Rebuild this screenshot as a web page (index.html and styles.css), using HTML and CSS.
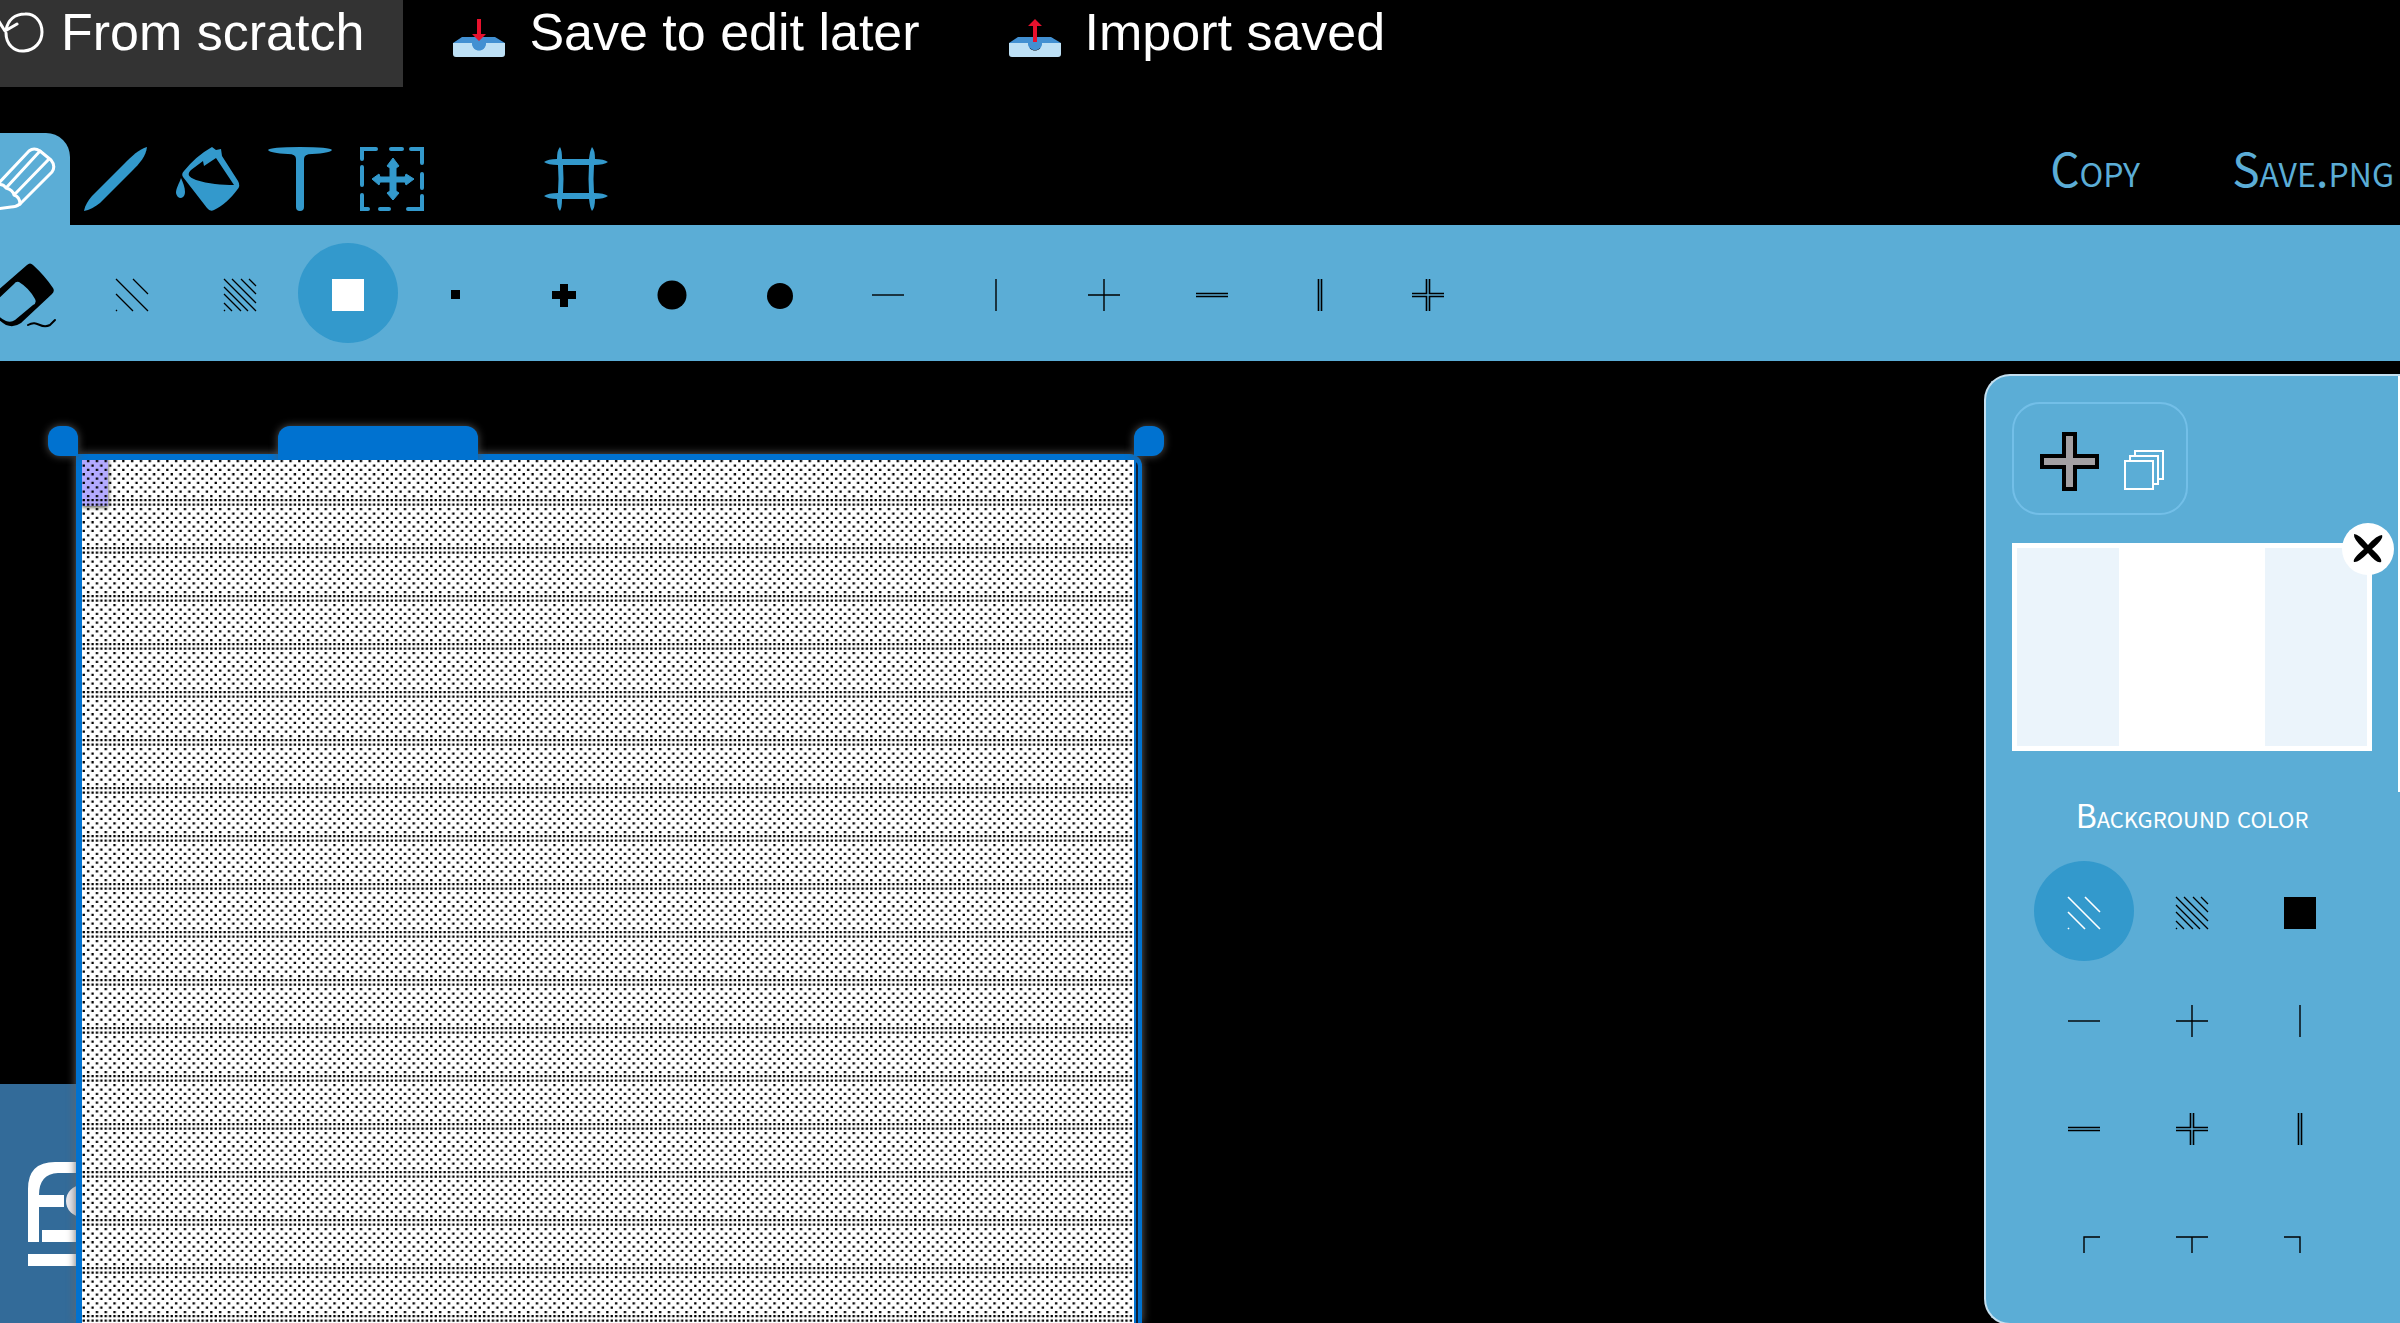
FILE: index.html
```html
<!DOCTYPE html>
<html lang="en">
<head>
<meta charset="utf-8">
<meta name="viewport" content="width=device-width, initial-scale=1">
<title>Text drawing editor</title>
<link rel="stylesheet" href="styles.css">
</head>
<body>
<header class="file-bar">
  <button class="file-btn is-active" type="button">
    <svg class="reset-icon" viewBox="0 0 44 60" aria-hidden="true"><path d="M6 33C6 44 14 52 24 51C35 50 42 42 42 32C42 21 34 13 25 14C15 14 8 20 6 30M-2 20L5 31L17 24" fill="none" stroke="#fff" stroke-width="3" stroke-linecap="round" stroke-linejoin="round"/></svg>
    <span>From scratch</span>
  </button>
  <button class="file-btn" type="button">
    <svg class="tray-icon" viewBox="0 0 52 60" aria-hidden="true"><path d="M9 37H42L52 43V48H33C32 52 20 52 19 48H0V43Z" fill="#4290d2"/><path d="M0 43H19C19 53 33 53 33 43H52V54Q52 57 49 57H3Q0 57 0 54Z" fill="#bde0f5"/><path d="M19 42H33C33 53 19 53 19 42Z" fill="#4290d2"/><path d="M24 19H28V34H33L26 41L19 34H24Z" fill="#e8112d"/></svg>
    <span>Save to edit later</span>
  </button>
  <button class="file-btn" type="button">
    <svg class="tray-icon" viewBox="0 0 52 60" aria-hidden="true"><path d="M9 37H42L52 43V48H0V43Z" fill="#4290d2"/><path d="M0 43H19C19 53 33 53 33 43H52V54Q52 57 49 57H3Q0 57 0 54Z" fill="#bde0f5"/><path d="M19 42H33C33 53 19 53 19 42Z" fill="#4290d2"/><path d="M24 42V26H19L26 19L33 26H28V42Z" fill="#e8112d"/></svg>
    <span>Import saved</span>
  </button>
</header>

<nav class="tool-bar" aria-label="Tools">
  <div class="tools">
    <button class="tool is-active" type="button" aria-label="Pencil">
      <svg viewBox="0 0 64 64" aria-hidden="true"><g fill="none" stroke="#fff" stroke-width="3" stroke-linejoin="round" stroke-linecap="round"><path d="M5 38L37 4Q42 0 48 4L59 13Q64 19 60 25L28 57Q24 60 19 60L-3 63L2 44Z"/><path d="M5 38Q11 36 14 41Q21 43 22 48Q28 50 28 57M14 41L48 4M22 48L57 12"/></g></svg>
    </button>
    <button class="tool" type="button" aria-label="Line">
      <svg viewBox="0 0 64 64" aria-hidden="true"><path d="M63 0C62 9 56 16 48 24L16 56C11 60 5 63 0 64C1 58 4 54 8 49L40 17C48 9 55 2 63 0Z"/></svg>
    </button>
    <button class="tool" type="button" aria-label="Fill">
      <svg viewBox="0 0 64 64" aria-hidden="true"><path fill-rule="evenodd" d="M36 0L40 3L45 2L46 9L62 34Q65 39 61 43C55 51 47 59 38 63Q34 65 31 61L7 30Q5 27 8 24Q20 9 36 0ZM15 23C11 27 12 30 20 33C32 37 46 38 58 38L40 11L28 19L27 14Z"/><path d="M5 31C3 37 0 41 0 46Q1 51 5 51Q9 50 9 45C9 40 7 36 5 31Z"/></svg>
    </button>
    <button class="tool" type="button" aria-label="Text">
      <svg viewBox="0 0 64 64" aria-hidden="true"><path d="M0 3Q2 0 32 0Q62 0 64 3Q62 6 44 7Q36 7 36 12V60Q36 64 32 64Q28 64 28 60V12Q28 7 20 7Q2 6 0 3Z"/></svg>
    </button>
    <button class="tool" type="button" aria-label="Select and move">
      <svg viewBox="0 0 64 64" aria-hidden="true"><path d="M2 12V2H16M31 2H42M51 2H62V16M62 27V41M62 49V62H48M29 62H20M8 62H2V48M2 38V20" fill="none" stroke="#3399cc" stroke-width="4" stroke-linecap="round"/><path d="M33 11L39 19L36 21V30H45L46 27L54 32L46 38L45 35H36V44L39 46L33 53L27 46L30 44V35H20L19 38L12 32L19 27L20 30H30V21L27 19Z" stroke="#3399cc" stroke-linejoin="round"/></svg>
    </button>
    <button class="tool" type="button" aria-label="Blank tool"></button>
    <button class="tool" type="button" aria-label="Resize canvas">
      <svg viewBox="0 0 64 64" aria-hidden="true"><path d="M16 0Q18 3 18 12H45Q46 3 48 0Q51 3 51 12Q60 12 64 15Q60 18 50 18Q49 31 50 46Q60 46 64 49Q60 52 51 52Q51 61 48 64Q46 61 45 52H18Q18 61 16 64Q13 61 13 52Q4 52 0 49Q4 46 14 46Q15 31 14 18Q4 18 0 15Q4 12 13 12Q13 3 16 0ZM19 18Q20 32 19 46H45Q44 32 45 18Z" fill-rule="evenodd"/></svg>
    </button>
  </div>
  <div class="export">
    <button class="export-btn" type="button">Copy</button>
    <button class="export-btn" type="button">Save.png</button>
  </div>
</nav>

<div class="brush-bar" role="group" aria-label="Brush">
  <button class="brush" type="button" aria-label="Eraser"><svg class="eraser" viewBox="0 0 64 64" aria-hidden="true"><path fill-rule="evenodd" d="M35 2Q38-1 41 2Q53 13 61 25Q63 28 60 31L29 60Q22 65 14 62Q3 55-6 43Q-7 39-4 36ZM22 21L1 41Q3 53 14 58Q19 60 23 57L41 42Q45 40 43 36Q37 25 27 19Q24 18 22 21Z"/><path d="M36 62C46 56 48 67 58 62Q60 60 63 57" fill="none" stroke="#000" stroke-width="2" stroke-linecap="round"/></svg></button>
  <button class="brush" type="button" aria-label="Light hatch"><svg viewBox="0 0 32 32"><path class="ln" d="M0 0L32 32M17 0L32 15M0 15L17 32M0 31L1 32"/></svg></button>
  <button class="brush" type="button" aria-label="Dense hatch"><svg viewBox="0 0 32 32"><path class="ln" d="M0 0L32 32M8 0L32 24M17 0L32 15M25 0L32 7M0 8L24 32M0 15L17 32M0 24L8 32M0 31L1 32"/></svg></button>
  <button class="brush is-active" type="button" aria-label="Solid square"><svg viewBox="0 0 32 32"><path d="M0 0H32V32H0Z"/></svg></button>
  <button class="brush" type="button" aria-label="Small square"><svg viewBox="0 0 32 32"><path d="M11 11H20V20H11Z"/></svg></button>
  <button class="brush" type="button" aria-label="Thick plus"><svg viewBox="0 0 32 32"><path d="M12 5H20V12H28V20H20V28H12V20H4V12H12Z"/></svg></button>
  <button class="brush" type="button" aria-label="Large dot"><svg viewBox="0 0 32 32"><circle cx="16" cy="16" r="14.5"/></svg></button>
  <button class="brush" type="button" aria-label="Dot"><svg viewBox="0 0 32 32"><circle cx="16" cy="17" r="13"/></svg></button>
  <button class="brush" type="button" aria-label="Horizontal line"><svg viewBox="0 0 32 32"><path class="px" d="M0 16H32"/></svg></button>
  <button class="brush" type="button" aria-label="Vertical line"><svg viewBox="0 0 32 32"><path class="px" d="M16 0V32"/></svg></button>
  <button class="brush" type="button" aria-label="Cross"><svg viewBox="0 0 32 32"><path class="px" d="M0 16H32M16 0V32"/></svg></button>
  <button class="brush" type="button" aria-label="Double horizontal line"><svg viewBox="0 0 32 32"><path class="dbl" d="M0 14.5H32M0 17.5H32"/></svg></button>
  <button class="brush" type="button" aria-label="Double vertical line"><svg viewBox="0 0 32 32"><path class="dbl" d="M14.5 0V32M17.5 0V32"/></svg></button>
  <button class="brush" type="button" aria-label="Double cross"><svg viewBox="0 0 32 32"><path class="dbl" d="M0 14.5H14.5V0M17.5 0V14.5H32M0 17.5H14.5V32M17.5 32V17.5H32"/></svg></button>
</div>

<main class="workspace">
  <section class="stage" aria-label="Drawing">
    <a class="badge" href="#" aria-label="Project page">
      <svg viewBox="0 0 100 239" aria-hidden="true"><path d="M28 158V105Q28 78 55 78H100V89H58Q39 90 39 111H64V123H39V158Z" fill="#fff"/><circle cx="82" cy="117" r="16" fill="#e8e8ee"/><path d="M42 146H100V158H42ZM28 170H100V182H28Z" fill="#fff"/></svg>
    </a>
    <div class="frame">
      <i class="handle handle-left"></i>
      <i class="grip"></i>
      <i class="handle handle-right"></i>
      <svg class="sheet" aria-hidden="true">
        <defs>
          <pattern id="shade" x="0" y="0" width="8.8" height="48" patternUnits="userSpaceOnUse">
            <path d="M5 0h2.3v2.3h-2.3zM.6 4.4h2.3v2.3h-2.3zM5 8.7h2.3v2.3h-2.3zM.6 13.1h2.3v2.3h-2.3zM5 17.5h2.3v2.3h-2.3zM.6 21.8h2.3v2.3h-2.3zM5 26.2h2.3v2.3h-2.3zM.6 30.5h2.3v2.3h-2.3zM5 35h2.3v2.3h-2.3zM.6 39h2.3v2.3h-2.3zM5 39h2.3v2.3h-2.3zM.6 43.4h2.3v2.3h-2.3zM5 43.4h2.3v2.3h-2.3z"/>
          </pattern>
        </defs>
        <rect class="caret" x="0" y="-2" width="26" height="48"/>
        <rect width="100%" height="100%" fill="url(#shade)"/>
      </svg>
    </div>
  </section>

  <aside class="panel">
    <div class="layer-actions">
      <button class="icon-btn" type="button" aria-label="Add layer"><svg class="add-icon" viewBox="0 0 60 60"><path d="M24 2H35V24H57V35H35V57H24V35H2V24H24Z" fill="#a3a0a3" stroke="#000" stroke-width="4"/></svg></button>
      <button class="icon-btn" type="button" aria-label="Duplicate layer"><svg class="copy-icon" viewBox="0 0 40 40"><path d="M1 11H29V39H1ZM6 11V6H34V34H29M11 6V1H39V29H34" fill="none" stroke="#fff" stroke-width="2"/></svg></button>
    </div>
    <div class="layer">
      <div class="preview"><span class="preview-art"></span></div>
      <button class="close" type="button" aria-label="Delete layer"><svg viewBox="0 0 30 30"><path d="M1 0Q6 0 15 11Q24 1 29 1Q31 5 19 15Q30 25 28 28Q24 30 15 19Q5 29 1 28Q-1 25 11 15Q0 5 1 0Z"/></svg></button>
    </div>
    <h2 class="panel-title">Background color</h2>
    <div class="swatches" role="group" aria-label="Background color">
      <button class="brush is-active" type="button" aria-label="Light hatch"><svg viewBox="0 0 32 32"><path class="ln" d="M0 0L32 32M17 0L32 15M0 15L17 32M0 31L1 32"/></svg></button>
      <button class="brush" type="button" aria-label="Dense hatch"><svg viewBox="0 0 32 32"><path class="ln" d="M0 0L32 32M8 0L32 24M17 0L32 15M25 0L32 7M0 8L24 32M0 15L17 32M0 24L8 32M0 31L1 32"/></svg></button>
      <button class="brush" type="button" aria-label="Solid square"><svg viewBox="0 0 32 32"><path d="M0 0H32V32H0Z"/></svg></button>
      <button class="brush" type="button" aria-label="Horizontal line"><svg viewBox="0 0 32 32"><path class="px" d="M0 16H32"/></svg></button>
      <button class="brush" type="button" aria-label="Cross"><svg viewBox="0 0 32 32"><path class="px" d="M0 16H32M16 0V32"/></svg></button>
      <button class="brush" type="button" aria-label="Vertical line"><svg viewBox="0 0 32 32"><path class="px" d="M16 0V32"/></svg></button>
      <button class="brush" type="button" aria-label="Double horizontal line"><svg viewBox="0 0 32 32"><path class="dbl" d="M0 14.5H32M0 17.5H32"/></svg></button>
      <button class="brush" type="button" aria-label="Double cross"><svg viewBox="0 0 32 32"><path class="dbl" d="M0 14.5H14.5V0M17.5 0V14.5H32M0 17.5H14.5V32M17.5 32V17.5H32"/></svg></button>
      <button class="brush" type="button" aria-label="Double vertical line"><svg viewBox="0 0 32 32"><path class="dbl" d="M14.5 0V32M17.5 0V32"/></svg></button>
      <button class="brush" type="button" aria-label="Top left corner"><svg viewBox="0 0 32 32"><path class="px" d="M32 16H16V32"/></svg></button>
      <button class="brush" type="button" aria-label="Top tee"><svg viewBox="0 0 32 32"><path class="px" d="M0 16H32M16 16V32"/></svg></button>
      <button class="brush" type="button" aria-label="Top right corner"><svg viewBox="0 0 32 32"><path class="px" d="M0 16H16V32"/></svg></button>
    </div>
  </aside>
</main>
</body>
</html>
```

FILE: styles.css
```css
* { box-sizing: border-box; }

body {
  margin: 0;
  height: 100vh;
  display: flex;
  flex-direction: column;
  overflow: hidden;
  background: #000;
  color: #fff;
  font-family: "Liberation Sans", Arial, sans-serif;
}

button {
  margin: 0;
  padding: 0;
  border: 0;
  background: none;
  color: inherit;
  font: inherit;
  cursor: pointer;
  flex: none;
}

svg {
  display: block;
  overflow: visible;
}

/* File actions */
.file-bar {
  display: flex;
  flex: none;
}

.file-btn {
  display: flex;
  gap: 24px;
  height: 87px;
  padding: 2px 39px 0 50px;
  font-size: 52px;
  line-height: 60px;
  white-space: nowrap;
}

.file-btn.is-active {
  gap: 17px;
  padding-left: 0;
  background: #333;
}

.reset-icon {
  width: 44px;
  height: 60px;
  margin-top: -2px;
}

.tray-icon {
  width: 52px;
  height: 60px;
  margin-top: -2px;
}

/* Tools */
.tool-bar {
  display: flex;
  justify-content: space-between;
  flex: none;
  margin-top: 46px;
}

.tools {
  display: flex;
  margin-left: -22px;
}

.tool {
  width: 92px;
  height: 92px;
  padding: 0 14px;
  border-radius: 24px 24px 0 0;
  fill: #3399cc;
}

.tool svg {
  width: 64px;
  height: 64px;
}

.tool.is-active { background: #5badd6; }

.export {
  display: flex;
  gap: 92px;
  padding-right: 6px;
}

.export-btn {
  color: #5badd6;
  font-family: "Noto Sans CJK SC", sans-serif;
  font-size: 46px;
  font-variant: small-caps;
  line-height: 68px;
  height: 68px;
}

/* Brushes */
.brush-bar {
  display: flex;
  flex: none;
  gap: 8px;
  height: 136px;
  padding: 18px 0;
  margin-left: -26px;
  background: #5badd6;
}

.brush {
  display: grid;
  place-items: center;
  width: 100px;
  height: 100px;
  padding-top: 4px;
  border-radius: 50%;
  fill: #000;
  stroke: none;
}

.brush svg {
  width: 32px;
  height: 32px;
}

.brush .eraser {
  width: 64px;
  height: 64px;
}

.ln, .px, .dbl {
  fill: none;
  stroke: #000;
}

.ln { stroke-width: 1.3; }

.px {
  stroke-width: 1.4;
}

.dbl {
  stroke-width: 1.6;
}

.brush.is-active {
  background: #3399cc;
  fill: #fff;
}

.brush.is-active .ln {
  stroke: #fff;
  stroke-width: 1.6;
}

/* Workspace */
.workspace {
  display: flex;
  flex: 1;
  min-height: 0;
}

.stage {
  position: relative;
  display: flex;
  flex: 1;
  min-width: 0;
  padding: 93px 0 0 76px;
}

.badge {
  position: absolute;
  left: 0;
  bottom: 0;
  width: 100px;
  height: 239px;
  background: #336b99;
}

.frame {
  position: relative;
  width: 1066px;
  border: solid #0072d0;
  border-width: 6px 4px 0 6px;
  border-top-right-radius: 12px;
  background: #0b2038;
  box-shadow: 0 0 10px #666;
}

.sheet {
  width: calc(100% - 2px);
  height: 100%;
  border-right: 2px solid #0072d0;
  background: #fff;
  overflow: hidden;
}

.caret {
  fill: #b3aaff;
  filter: drop-shadow(0 1px 2px #443);
}

.handle, .grip {
  position: absolute;
  background: #0072d0;
  box-shadow: 0 0 8px #555;
}

.handle {
  top: -34px;
  width: 30px;
  height: 30px;
}

.handle-left {
  left: -34px;
  border-radius: 12px 12px 0 12px;
}

.handle-right {
  right: -26px;
  border-radius: 12px 12px 12px 0;
}

.grip {
  top: -34px;
  left: 196px;
  width: 200px;
  height: 34px;
  border-radius: 12px 12px 0 0;
  clip-path: inset(-10px -10px 0 -10px);
}

/* Side panel */
.panel {
  display: flex;
  flex: none;
  flex-direction: column;
  width: 416px;
  margin: 13px 0 -2px;
  padding: 26px;
  border: 2px solid #c5e0f0;
  border-width: 2px 0 2px 2px;
  border-radius: 26px 0 0 26px;
  background: linear-gradient(#fff, #fff) right top / 2px 416px no-repeat #5badd6;
}

.layer-actions {
  display: flex;
  align-self: flex-start;
  gap: 24px;
  width: 176px;
  height: 113px;
  padding: 28px 24px 0 26px;
  border: 2px solid #73bfe8;
  border-radius: 28px;
}

.icon-btn { align-self: flex-start; }

.add-icon {
  width: 60px;
  height: 60px;
}

.copy-icon {
  width: 40px;
  height: 40px;
  margin-top: 18px;
}

.layer {
  position: relative;
  width: 360px;
  margin-top: 28px;
}

.preview {
  height: 208px;
  border: 5px solid #fff;
  background: #ebf4fb;
}

.preview-art {
  display: block;
  width: 146px;
  height: 100%;
  margin: 0 auto;
  background: #fff;
}

.close {
  position: absolute;
  top: -20px;
  right: -22px;
  display: grid;
  place-items: center;
  width: 52px;
  height: 52px;
  border-radius: 50%;
  background: #fff;
}

.close svg {
  width: 30px;
  height: 30px;
}

.panel-title {
  width: 360px;
  margin: 39px 0 0;
  font-family: "Noto Sans CJK SC", sans-serif;
  font-size: 32px;
  font-weight: 400;
  font-variant: small-caps;
  line-height: 48px;
  text-align: center;
}

.swatches {
  display: grid;
  grid-template-columns: repeat(3, 100px);
  gap: 8px;
  justify-content: center;
  width: 360px;
  margin-top: 23px;
}
```
